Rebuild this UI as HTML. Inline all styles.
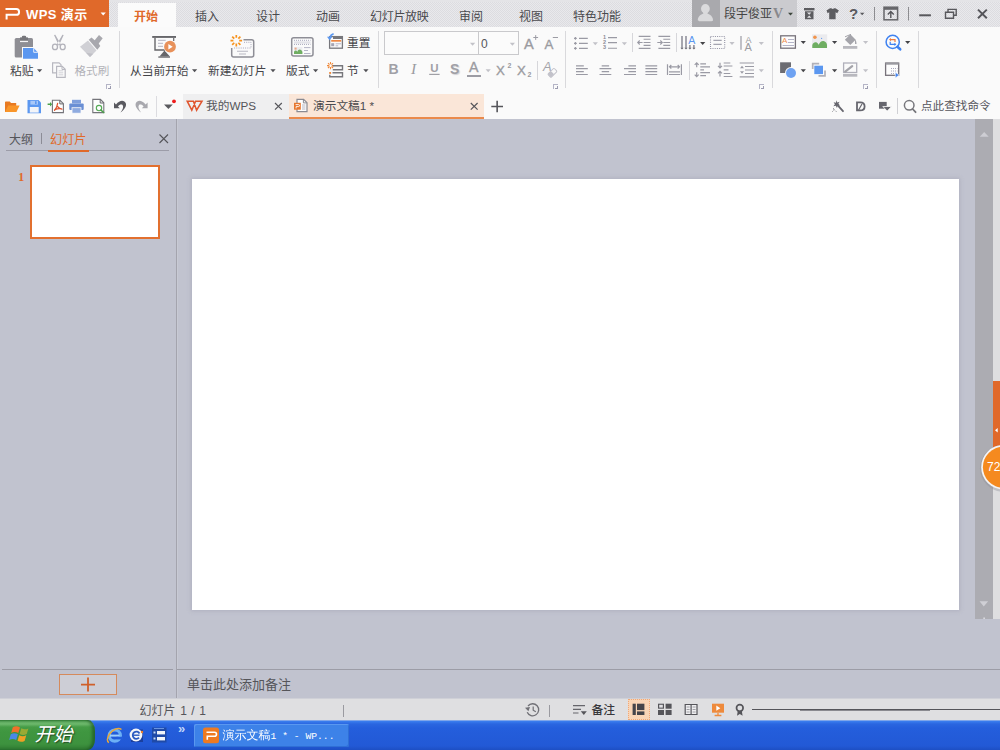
<!DOCTYPE html>
<html lang="zh-CN">
<head>
<meta charset="utf-8">
<title>WPS 演示</title>
<style>
*{box-sizing:border-box;margin:0;padding:0}
html,body{width:1000px;height:750px;overflow:hidden;background:#c1c3cf}
body{position:relative;font-family:"Liberation Sans","Noto Sans CJK SC",sans-serif;font-size:12px;color:#4a4a4e;line-height:1}
.abs{position:absolute}
.t{position:absolute;white-space:nowrap;line-height:14px;height:14px;font-size:12px}
.dis{color:#b2b2b8}
svg.ic{position:absolute;left:0;top:0;width:1000px;height:750px;overflow:visible;pointer-events:none}
#titlerow{left:0;top:0;width:1000px;height:27px;background:#e4e4e7}
#titledither{left:0;top:2px;width:1000px;height:25px;background:repeating-conic-gradient(#e9e9ec 0 25%,#dcdce0 0 50%) 0 0/2px 2px}
#wpsbtn{left:0;top:0;width:109px;height:27px;background:#e0692a}
#tabactive{left:118px;top:3px;width:58px;height:24px;background:#fbfbfb}
.tab{top:10px;color:#4a4a4e}
#userbox{left:692px;top:0;width:105px;height:27px;background:#cbcbcf}
#avatar{left:692px;top:0;width:28px;height:27px;background:#a9a9ad}
#ribbon{left:0;top:27px;width:1000px;height:65px;background:#fafafa}
.vsep{position:absolute;width:1px;background:#d9d9dc;top:31px;height:57px}
.ssep{position:absolute;width:1px;background:#d6d6da}
#qbar{left:0;top:92px;width:1000px;height:27px;background:#fafafa}
#doctab1{left:183px;top:94px;width:106px;height:25px;background:#efeff0}
#doctab2{left:289px;top:94px;width:195px;height:25px;background:#fae6d8;border-bottom:2px solid #ea8a4c}
#fontbox{left:384px;top:31px;width:135px;height:24px;border:1px solid #c9c9cc;background:#fbfbfb}
#fontdiv{left:478px;top:31px;width:1px;height:24px;background:#c9c9cc}
#main{left:0;top:119px;width:1000px;height:579px;background:#c1c3cf}
#slide{left:192px;top:179px;width:767px;height:431px;background:#fff;box-shadow:0 0 4px 1px rgba(150,150,170,.4)}
#thumb{left:30px;top:165px;width:130px;height:74px;background:#fff;border:2px solid #e2702f}
#status{left:0;top:698px;width:1000px;height:22px;background:linear-gradient(#cfd0d7 0,#cfd0d7 1px,#dfdfe1 1px)}
#taskbar{left:0;top:720px;width:1000px;height:30px;background:linear-gradient(#7fa6ea 0,#7fa6ea 1px,#3b7ff0 1px,#2a66e0 4px,#245edc 8px,#2259d6 26px,#1d4fc4 30px)}
</style>
</head>
<body>
<!-- TITLE ROW -->
<div class="abs" id="titlerow"></div>
<div class="abs" id="titledither"></div>
<div class="abs" id="wpsbtn"></div>
<div class="abs" id="tabactive"></div>
<div class="t" style="left:26px;top:7.5px;font-size:13px;color:#fff;font-weight:bold;letter-spacing:.4px">WPS 演示</div>
<div class="t tab" style="left:134px;color:#e0692a;font-weight:bold">开始</div>
<div class="t tab" style="left:195px">插入</div>
<div class="t tab" style="left:256px">设计</div>
<div class="t tab" style="left:316px">动画</div>
<div class="t tab" style="left:370px;letter-spacing:-.3px">幻灯片放映</div>
<div class="t tab" style="left:459px">审阅</div>
<div class="t tab" style="left:519px">视图</div>
<div class="t tab" style="left:573px">特色功能</div>
<div class="abs" id="userbox"></div>
<div class="abs" id="avatar"></div>
<div class="t" style="left:724px;top:7px;color:#444">段宇俊亚</div>
<div class="t" style="left:773px;top:7px;font-family:'Liberation Serif',serif;font-size:14px;color:#88888c;font-weight:bold">V</div>
<div class="t" style="left:849px;top:7px;font-size:15px;font-weight:bold;color:#5a5a5e">?</div>
<svg class="ic" viewBox="0 0 1000 750">
 <!-- WPS P logo -->
 <path d="M5.5 9H16.2a2.9 2.9 0 0 1 0 5.8H6.6V19.4" fill="none" stroke="#fff" stroke-width="2"/>
 <path d="M100.6 12.6h5.2l-2.6 3z" fill="#fff"/>
 <!-- avatar -->
 <ellipse cx="705.400" cy="8.800" rx="4.400" ry="4.700" fill="#dadadc"/>
 <path d="M697.800 20c0-3.600 3-5.600 5.600-6.600l-.6-2h5.200l-.6 2c2.600 1 5.600 3 5.600 6.600 0 .8-.6 1.200-1.400 1.200h-12.400c-.8 0-1.400-.4-1.400-1.200z" fill="#dadadc"/>
 <path d="M788 12.800h5l-2.500 2.800z" fill="#3c463c"/>
 <!-- box icon -->
 <g fill="#5c5c60">
  <rect x="804" y="8" width="10.500" height="2.400"/>
  <path d="M805 11.200h8.500v8h-8.500zM807 12.500l2.200 2.300 2.200-2.300zM807 17.800l2.200-2.300 2.200 2.300z" fill-rule="evenodd"/>
 </g>
 <!-- shirt icon -->
 <path d="M826.500 10.500l3.500-2.300h1.500c.4 1 2 1 2.400 0h1.500l3.500 2.300-1.700 2.700-1.600-.9v7h-6.400v-7l-1.600 .9z" fill="#5c5c60"/>
 <path d="M860 12.800h4.400l-2.200 2.500z" fill="#5a5a5e"/>
 <rect x="874" y="7" width="1" height="13.500" fill="#8c8c90"/>
 <rect x="908" y="7" width="1" height="13.500" fill="#8c8c90"/>
 <!-- collapse ribbon -->
 <rect x="884" y="7.200" width="13.600" height="12.600" fill="none" stroke="#66666a" stroke-width="1.500"/>
 <rect x="884" y="7.200" width="13.600" height="2.600" fill="#66666a"/>
 <path d="M890.800 18v-6M887.800 14.500l3-3 3 3" fill="none" stroke="#55555a" stroke-width="1.400"/>
 <!-- min / restore / close -->
 <rect x="919.200" y="14.300" width="11.700" height="2" fill="#58585c"/>
 <path d="M945.500 12.200h8v6h-8zM948 12v-2.600h8.200v5.800h-2.500" fill="none" stroke="#58585c" stroke-width="1.400"/>
 <path d="M978 9.600l8.800 8.600M986.800 9.600l-8.800 8.600" fill="none" stroke="#55555a" stroke-width="2"/>
</svg>
<!-- RIBBON -->
<div class="abs" id="ribbon"></div>
<div class="vsep" style="left:119px"></div>
<div class="vsep" style="left:378px"></div>
<div class="vsep" style="left:565px"></div>
<div class="vsep" style="left:772px"></div>
<div class="vsep" style="left:876px"></div>
<div class="vsep" style="left:918px"></div>
<div class="ssep" style="left:537px;top:61px;height:19px"></div>
<div class="ssep" style="left:632px;top:33px;height:19px"></div>
<div class="ssep" style="left:676px;top:33px;height:19px"></div>
<div class="ssep" style="left:689px;top:61px;height:19px"></div>
<div class="abs" id="fontbox"></div>
<div class="abs" id="fontdiv"></div>
<div class="t" style="left:10px;top:63.7px;font-size:11.7px;color:#444448">粘贴</div>
<div class="t dis" style="left:74.5px;top:63.7px;font-size:11.6px">格式刷</div>
<div class="t" style="left:130px;top:63.7px;font-size:11.7px;color:#444448">从当前开始</div>
<div class="t" style="left:208px;top:63.7px;font-size:11.7px;color:#444448">新建幻灯片</div>
<div class="t" style="left:286px;top:63.7px;font-size:11.7px;color:#444448">版式</div>
<div class="t" style="left:347px;top:35.7px;font-size:11.7px;color:#444448">重置</div>
<div class="t" style="left:347px;top:63.7px;font-size:11.7px;color:#444448">节</div>
<div class="t" style="left:481px;top:36.500px;color:#55555a;font-size:12px">0</div>
<div class="t" id="tB" style="left:388.5px;top:62px;font-weight:bold;font-size:14px;color:#a0a0a6">B</div>
<div class="t" id="tI" style="left:411px;top:62px;font-family:'Liberation Serif',serif;font-style:italic;font-size:15.5px;color:#9a9aa0">I</div>
<div class="t" id="tU" style="left:430.3px;top:61.4px;font-size:11.5px;font-weight:bold;color:#a0a0a6">U</div>
<div class="t" id="tS" style="left:450px;top:62.3px;font-size:14px;font-weight:bold;color:#a0a0a6;text-shadow:1px 1px 1px #d0d0d4">S</div>
<div class="t" id="tA" style="-webkit-text-stroke:.35px #9a9aa0;left:469px;top:60.3px;font-size:14.2px;color:#9a9aa0">A</div>
<div class="t" id="tX1" style="-webkit-text-stroke:.35px #9a9aa0;left:496px;top:63.8px;font-size:13.2px;color:#9a9aa0">X</div>
<div class="t" style="left:507.500px;top:59px;font-size:7px;font-weight:bold;color:#9a9aa0">2</div>
<div class="t" id="tX2" style="-webkit-text-stroke:.35px #9a9aa0;left:517px;top:63.8px;font-size:13.2px;color:#9a9aa0">X</div>
<div class="t" style="left:527.500px;top:67.500px;font-size:7px;font-weight:bold;color:#9a9aa0">2</div>
<div class="t" id="tAp" style="-webkit-text-stroke:.35px #9a9aa0;left:524px;top:37.3px;font-size:14.6px;color:#9a9aa0">A</div>
<div class="t" id="tAm" style="-webkit-text-stroke:.35px #9a9aa0;left:544.5px;top:38.3px;font-size:13.3px;color:#9a9aa0">A</div>
<div class="t" style="left:543px;top:60px;font-size:13px;font-style:italic;color:#a4a4aa">A</div>
<div class="t" style="left:688.3px;top:33px;font-size:10.6px;color:#5b97f0">A</div>
<div class="t" style="left:745.500px;top:33px;font-size:9px;color:#9a9aa0">A</div>
<div class="t" style="left:744.500px;top:39.500px;font-size:11px;color:#9a9aa0">A</div>
<svg class="ic" viewBox="0 0 1000 750">
<defs>
 <path id="dn" d="M0 0h5.200l-2.600 3z"/>
 <g id="launch"><rect x="0" y="0" width="5" height="1" fill="#b4b4c6"/><rect x="0" y="0" width="1" height="5" fill="#b4b4c6"/><rect x="4" y="2" width="1" height="3" fill="#9c9cb0"/><rect x="2" y="4" width="3" height="1" fill="#9c9cb0"/></g>
</defs>
<!-- paste -->
<rect x="14.700" y="38" width="18.300" height="19.500" rx="1.600" fill="#8e8e94"/>
<rect x="20" y="37.400" width="8" height="3.400" fill="#77777c"/>
<rect x="21.800" y="35.800" width="4.400" height="3" rx="1.400" fill="#77777c"/>
<rect x="20" y="40.800" width="8" height="1.300" fill="#f4f4f6"/>
<path d="M22 47h12.200l4.800 4.600v8h-17z" fill="#fafafa"/>
<path d="M23 48h10.600l4.400 4.400v6.300h-15z" fill="#5b97f0"/>
<path d="M33.700 48.200v4.100h4.100" fill="none" stroke="#f4f7fd" stroke-width=".9"/>
<use href="#dn" x="37" y="69.300" fill="#505055"/>
<!-- scissors -->
<g fill="none" stroke="#b2b2ba" stroke-width="1.300">
 <ellipse cx="55" cy="46.900" rx="2.500" ry="2.700"/>
 <ellipse cx="62.700" cy="46.900" rx="2.500" ry="2.700"/>
</g>
<path d="M54 35l1.300-.3 5.600 9.700-1.600 1.200-2-3.300zM63.700 35l-1.300-.3-5.600 9.700 1.600 1.200 2-3.300z" fill="#b2b2ba"/>
<!-- copy -->
<g fill="none" stroke="#b8b8c0" stroke-width="1.200">
 <path d="M56.300 72.800h-3.700v-10h6.500l1.900 1.900v1.500"/>
 <path d="M56.600 66.300h5.600l3 3v8h-8.600z" fill="#fafafa"/>
 <path d="M62 66.500v3h3" stroke-width="1"/>
 <path d="M58.600 70.800h4.600M58.600 72.800h4.600M58.600 74.800h4.600" stroke-width=".8" stroke="#c6c6ce"/>
</g>
<!-- format brush -->
<path d="M99 35l3.700 3.300-4 5.200 1.600 2.500-3 3.700-8.600-10 2.800-2.200 3.200 2.800z" fill="#a8a8ae"/>
<path d="M88 40.600l8.500 9.900-6.500 6.500-10-10.300z" fill="#d0d0d5"/>
<path d="M86 52.800l4 4.200 3.300-3.300z" fill="#c0c0c6"/>
<use href="#launch" x="106" y="84"/>
<!-- slideshow from current -->
<rect x="152.200" y="36" width="23.800" height="1.900" fill="#66666a"/>
<path d="M155 38v12h10" fill="none" stroke="#66666a" stroke-width="1.400"/>
<path d="M173.700 38v3" fill="none" stroke="#66666a" stroke-width="1.200"/>
<path d="M158 40.300h7.700M158 43.300h5M158 46.300h5" stroke="#b4b4c2" stroke-width="1"/>
<path d="M164.500 50.500l-5 6h10.400z" fill="#66666a"/>
<rect x="158.300" y="56.400" width="11.700" height="1.300" fill="#66666a"/>
<circle cx="170" cy="46.700" r="6.300" fill="#fafafa"/>
<circle cx="170" cy="46.700" r="5.900" fill="#e8915a"/>
<path d="M168.400 43.900v5.700l4.300-2.900z" fill="#fff"/>
<use href="#dn" x="192" y="69.300" fill="#505055"/>
<!-- new slide -->
<path d="M243.500 39.700h8.200a2 2 0 0 1 2 2v13.200a2 2 0 0 1 -2 2h-18a2 2 0 0 1 -2 -2v-7" fill="none" stroke="#8e8e96" stroke-width="1.500"/>
<path d="M244 42.300h7v5.700h-17" fill="none" stroke="#a8a8bc" stroke-width="1" stroke-dasharray="1 1.200"/>
<path d="M237 51.300h11M239 54h7" stroke="#b8b8c2" stroke-width="1.100"/>
<path d="M239.20 40.70L242.10 40.70M238.35 42.75L240.40 44.80M236.30 43.60L236.30 46.50M234.25 42.75L232.20 44.80M233.40 40.70L230.50 40.70M234.25 38.65L232.20 36.60M236.30 37.80L236.30 34.90M238.35 38.65L240.40 36.60" stroke="#f7931e" stroke-width="1.700" fill="none"/>
<use href="#dn" x="270.400" y="69.300" fill="#505055"/>
<!-- layout -->
<rect x="291.700" y="37.700" width="21.300" height="18.400" rx="2" fill="none" stroke="#8e8e96" stroke-width="1.500"/>
<rect x="294" y="41.400" width="16.500" height="2.200" fill="#e2e2e8"/>
<path d="M294 40.300h16.500M294 44.400h16.500" stroke="#a8a8bc" stroke-width="1" stroke-dasharray="1 1"/>
<rect x="294" y="47" width="8.400" height="7" fill="#ececf0"/>
<rect x="294.600" y="47.600" width="2" height="2" fill="#e8a888"/>
<path d="M294 54v-2.200c1-1.600 2.400-1.600 3.400 0 .8-2.600 3.400-3.400 5 0v2.200z" fill="#6fae62"/>
<path d="M304 47.600h6.500M304 50.500h4M304 53.500h6.500" stroke="#b4b4c6" stroke-width="1"/>
<use href="#dn" x="313" y="69.300" fill="#505055"/>
<!-- reset -->
<rect x="329.600" y="36.600" width="12.800" height="11.600" fill="none" stroke="#77777c" stroke-width="1.300"/>
<rect x="333" y="36" width="10" height="3" fill="#77777c"/>
<rect x="331.200" y="40" width="10" height="1.700" fill="#ee8844"/>
<rect x="331.200" y="43.200" width="3" height="3" fill="#a4a4b4"/>
<path d="M335.600 43.800h5.400M335.600 45.800h2.600" stroke="#b4b4c6" stroke-width="1"/>
<path d="M333.600 33.800c-2 .6-3.200 2-3.600 3.800" fill="none" stroke="#5b97f0" stroke-width="1.700"/>
<path d="M327 36.800h5.400l-2.800 3.400z" fill="#5b97f0"/>
<!-- section -->
<g stroke="#f08a3c" stroke-width="1.100">
 <path d="M330.500 62v2.300M330.500 67v2.300M327 65.600h2.300M331.800 65.600h2.300M328 63.200l1.500 1.500M333 63.200l-1.500 1.500M328 68l1.500-1.500M333 68l-1.500-1.500"/>
</g>
<path d="M332.800 65.700h9.700v4h-9.700M329.800 74.800v2h12.700v-4.100h-10" fill="none" stroke="#77777c" stroke-width="1.400"/>
<rect x="329.200" y="72" width="1.900" height="1.900" fill="#f08a3c"/>
<use href="#dn" x="363.300" y="69.300" fill="#505055"/>
<!-- font box arrows -->
<use href="#dn" x="470" y="42.800" fill="#c2c2c8" transform="translate(0 0)"/>
<use href="#dn" x="509.800" y="42.800" fill="#c2c2c8"/>
<rect x="429.2" y="73.8" width="10.4" height="1.2" fill="#a0a0a6"/>
<!-- A underline -->
<rect x="467" y="75" width="14" height="2" fill="#9c9ca4"/>
<use href="#dn" x="485.600" y="69.300" fill="#c2c2c8"/>
<!-- A+ A- marks -->
<path d="M533.300 37.500h4.800M535.700 35.100v4.800" stroke="#9c9ca4" stroke-width="1"/>
<path d="M552.800 37.500h5.200" stroke="#9c9ca4" stroke-width="1"/>
<!-- eraser -->
<g transform="rotate(-45 552.400 72.800)">
 <rect x="548" y="70.500" width="8.800" height="4.600" rx="1" fill="#fafafa" stroke="#c2c2ca" stroke-width="1"/>
 <rect x="548" y="70.500" width="4.600" height="4.600" rx="1" fill="#c2c2ca"/>
</g>
<use href="#launch" x="553" y="84"/>
<!-- bullets -->
<g stroke="#9a9aa4" stroke-width="1.100">
 <path d="M579 38.400h8.800M579 43.400h8.800M579 48.400h8.800"/>
 <path d="M574 38.400h2.800M575.400 37v2.800M574 43.400h2.800M575.400 42v2.800M574 48.400h2.800M575.400 47v2.800"/>
 <path d="M608 37.600h9M608 42.600h9M608 48.300h9"/>
</g>
<use href="#dn" x="592.700" y="42.300" fill="#c2c2c8"/>
<use href="#dn" x="621.800" y="42.300" fill="#c2c2c8"/>
<!-- indent -->
<g stroke="#9a9aa4" stroke-width="1.100">
 <path d="M638.700 36.400h11.800M643.600 39.300h6.900M643.600 42.500h6.900M643.600 45.400h6.900M638.700 48.400h11.800"/>
 <path d="M637.600 42.500h5M639.700 40.500l-2 2 2 2" fill="none"/>
 <path d="M658.400 36.400h11.800M663.300 39.300h6.900M663.300 42.500h6.900M663.300 45.400h6.900M658.400 48.400h11.800"/>
 <path d="M657.300 42.500h5M660.300 40.500l2 2-2 2" fill="none"/>
</g>
<!-- text direction -->
<g stroke="#8a8a96" stroke-width="1.500">
 <path d="M682 36v13M686 36v13M689.900 45v4M693.900 45v4"/>
</g>
<path d="M680.300 47.800h3.400l-1.700 1.800zM684.300 47.800h3.400l-1.700 1.800zM688.200 47.800h3.400l-1.700 1.800zM692.200 47.800h3.400l-1.700 1.800z" fill="#77777f"/>
<use href="#dn" x="700.100" y="42" fill="#444448"/>
<!-- align text dotted -->
<rect x="710.500" y="36.500" width="14.200" height="12" fill="none" stroke="#9090a2" stroke-width="1.100" stroke-dasharray="1 1.200"/>
<path d="M713.400 40.400h8.300M713.400 44.400h8.300" stroke="#a4a4b0" stroke-width="1.100"/>
<use href="#dn" x="729.400" y="42" fill="#c2c2c8"/>
<!-- char spacing -->
<path d="M741 36v13.700" stroke="#9a9aa4" stroke-width="1.200"/>
<use href="#dn" x="758.700" y="42" fill="#c2c2c8"/>
<!-- align row -->
<g stroke="#9a9aa4" stroke-width="1.200">
 <path d="M576 65.800h7.800M576 68.700h11.800M576 71.600h7.800M576 74.500h11.800"/>
 <path d="M601.700 65.800h7.400M599.500 68.700h11.800M601.700 71.600h7.400M599.500 74.500h11.800"/>
 <path d="M628.400 65.800h7.600M624 68.700h12M628.400 71.600h7.600M624 74.500h12"/>
 <path d="M645.400 65.800h11.800M645.400 68.700h11.800M645.400 71.600h11.800M645.400 74.500h11.800"/>
 <path d="M667.500 64.200v10.800M681.400 64.200v10.800M669 71.800h11M669 74.500h11"/>
 <path d="M669.500 66.800h10M671.300 65l-1.800 1.800 1.800 1.800M677.700 65l1.800 1.800-1.800 1.800" fill="none"/>
</g>
<!-- line spacing -->
<g stroke="#9a9aa4" stroke-width="1.200" fill="none">
 <path d="M700.300 63.900h5.700M700.300 66.800h9.700M700.300 69.800h3.700M700.300 72.600h9.700M700.300 75.600h5.700"/>
 <path d="M696.700 62.800v4.400M694.700 64.800l2-2 2 2M696.700 72.200v4.400M694.700 74.600l2 2 2-2"/>
 <path d="M723.700 63h6.600M723.700 66h8.700M723.700 69.800h4.800M723.700 73.500h6.600M723.700 76.500h8.700"/>
 <path d="M720 62.800v5M718 65.800l2 2 2-2M720 71.400v5M718 73.400l2-2 2 2"/>
 <path d="M739.700 63h14.300M745 66.500h9M745 70h9M745 73.500h9M739.700 76.800h14.300"/>
</g>
<path d="M740 68.300h4l-2-2.600zM740 71.200h4l-2 2.600z" fill="#9a9aa4"/>
<use href="#dn" x="758.700" y="69.300" fill="#c2c2c8"/>
<use href="#launch" x="759" y="84"/>
<!-- text box -->
<rect x="780.700" y="35.800" width="14.700" height="12.400" fill="#fdfdfd" stroke="#77727a" stroke-width="1.300"/>
<path d="M788 39.500h6M788 42.500h6M782.600 45.500h11.400" stroke="#b4b4c8" stroke-width="1"/>
<use href="#dn" x="800.700" y="41" fill="#444448"/>
<!-- picture -->
<rect x="812" y="34.300" width="15.200" height="13.600" fill="#ebebee"/>
<circle cx="814.900" cy="37.300" r="1.800" fill="#f0944c"/>
<circle cx="821.600" cy="38.400" r=".6" fill="#6aa0f0"/>
<path d="M812.300 47.900v-3c.8-2.200 2.600-3.300 4.400-2.400 1 .5 1.500 1.500 2 2.300 1-2.500 2.600-4 4.700-3.800 2 .2 3.200 1.700 3.600 3.800v3.100z" fill="#6fae62"/>
<use href="#dn" x="832" y="41" fill="#444448"/>
<!-- fill bucket -->
<path d="M850.300 34.300l5.400 5.400-5.400 5.400-5.400-5.400z" fill="#a4a4aa"/>
<path d="M845 36.800l6-2.500" stroke="#a4a4aa" stroke-width="1"/>
<path d="M855 39.500c1 .7 1.500 2.500 1.500 4.500h-1.500z" fill="#a4a4aa"/>
<rect x="843" y="46" width="14.300" height="2.800" fill="#b8b8be"/>
<use href="#dn" x="863" y="41" fill="#c2c2c8"/>
<!-- shapes -->
<rect x="780.100" y="62.300" width="10.900" height="10.700" fill="#6c6c72"/>
<circle cx="791" cy="73" r="6" fill="#fafafa"/>
<circle cx="791" cy="73" r="5" fill="#6ea2f2"/>
<use href="#dn" x="800.700" y="69.200" fill="#444448"/>
<!-- arrange -->
<path d="M812.700 69v-5.400h6.500M825 70.500v5.300h-6.500" fill="none" stroke="#b0b0b8" stroke-width="1.700"/>
<rect x="814.300" y="65.700" width="8.700" height="8.400" fill="#5b97f0"/>
<use href="#dn" x="832" y="69.200" fill="#444448"/>
<!-- outline -->
<rect x="843.600" y="63" width="13.100" height="9.500" fill="none" stroke="#b0b0ba" stroke-width="1.300"/>
<path d="M845.200 71.700l7-5.600" stroke="#a4a4aa" stroke-width="2.200" stroke-linecap="round"/>
<rect x="843" y="74" width="14.300" height="2.700" fill="#b8b8be"/>
<use href="#dn" x="863" y="69.200" fill="#c2c2c8"/>
<use href="#launch" x="863" y="84"/>
<!-- find replace -->
<circle cx="892.700" cy="41.900" r="6.600" fill="none" stroke="#3f82f0" stroke-width="1.500"/>
<path d="M897.400 46.800l2.800 2.500" stroke="#3f82f0" stroke-width="2.600" stroke-linecap="round"/>
<path d="M895 42v-2.400h-5" fill="none" stroke="#ee7a3c" stroke-width="1.200"/>
<path d="M891 38l-2 1.600 2 1.600z" fill="#ee7a3c"/>
<path d="M890.200 41.800v2.500h5" fill="none" stroke="#3f82f0" stroke-width="1.200"/>
<path d="M894.400 42.700l2 1.600-2 1.600z" fill="#3f82f0"/>
<use href="#dn" x="905.100" y="41" fill="#444448"/>
<!-- selection pane -->
<rect x="885.600" y="63.100" width="13.100" height="12.200" fill="#fdfdfd" stroke="#77727a" stroke-width="1.300"/>
<rect x="885.600" y="62.500" width="13.100" height="2.200" fill="#9a9aa0"/>
<path d="M891 68.500h6.500M891 71h6.500M891 73.500h4" stroke="#a8a8bc" stroke-width="1" stroke-dasharray="1 1"/>
<path d="M895.300 72.300l3.900 2.800-3.900 2.800z" fill="#3f82f0" stroke="#fdfdfd" stroke-width=".6"/>
</svg>
<div class="t" style="left:603px;top:34.5px;font-size:5.500px;font-weight:bold;color:#8c8c96;line-height:5px;height:20px;white-space:normal;width:4px">1 2 3</div>
<div class="t" style="left:782px;top:34.3px;font-size:8px;color:#ee8e4c">A</div>
<!-- QUICK BAR + DOC TABS -->
<div class="abs" id="qbar"></div>
<div class="abs" id="doctab1"></div>
<div class="abs" id="doctab2"></div>
<div class="ssep" style="left:156px;top:96px;height:21px;background:#dcdce0"></div>
<div class="ssep" style="left:897px;top:98px;height:16px;background:#d0d0d4"></div>
<div class="t" style="left:206px;top:98.7px;font-size:11.7px;color:#55555a">我的WPS</div>
<div class="t" style="left:313px;top:98.7px;font-size:11.7px;color:#4a4a4e">演示文稿1 *</div>
<div class="t" style="left:921px;top:99px;font-size:11.6px;color:#55555a">点此查找命令</div>
<svg class="ic" viewBox="0 0 1000 750">
<!-- open -->
<path d="M5 102.300c0-.5.300-.8.800-.8h4l1.200 1.400h5.200v9.100h-11.200z" fill="#e87a22"/>
<path d="M8.200 105.400h11.400l-3.200 6.600h-11.400z" fill="#f9962a"/>
<!-- save -->
<path d="M27.500 100h11l2.500 2.500v10.700h-13.500z" fill="#5b97f0"/>
<rect x="30.400" y="100.800" width="7.600" height="3.800" fill="#a9c8f8"/>
<rect x="35" y="101.200" width="1.600" height="2.800" fill="#5b97f0"/>
<rect x="29.800" y="107" width="8.900" height="5.600" fill="#f2f4f8"/>
<!-- pdf -->
<path d="M52.400 100.300h7.600l3.400 3.400v8.900h-11z" fill="#fdfdfd" stroke="#74747a" stroke-width="1.100"/>
<path d="M59.800 100.500v3.400h3.400" fill="none" stroke="#66666a" stroke-width="1"/>
<path d="M57.600 103.500c-.3 2.500-1.400 5-3 6.700M57.700 106.600c1 1.400 2.300 2.300 4.200 2.600M54.800 109.600c2-.9 4.500-1.300 6.800-.8" fill="none" stroke="#e0532e" stroke-width="1.300" stroke-linecap="round"/>
<path d="M47.600 103.500h2.400v-1.500l2.200 2.200-2.200 2.200v-1.500h-2.400z" fill="#4aa04a"/>
<!-- print -->
<rect x="72" y="99.800" width="9" height="3.600" fill="#7f9fdc"/>
<rect x="69.300" y="103.600" width="14.400" height="6.400" rx="1" fill="#6a8fd4"/>
<rect x="72" y="107.700" width="9" height="5.500" fill="#8fabdf" stroke="#fafafa" stroke-width=".8"/>
<!-- preview -->
<path d="M92.800 99.400h7.600l3.400 3.400v9.800h-11z" fill="#fdfdfd" stroke="#74747a" stroke-width="1.100"/>
<path d="M100.200 99.600v3.400h3.400" fill="none" stroke="#66666a" stroke-width="1"/>
<circle cx="99" cy="108.100" r="2.700" fill="#fdfdfd" stroke="#55aa55" stroke-width="1.100"/>
<path d="M101 110.100l2.700 2.400" stroke="#4aa04a" stroke-width="1.500" stroke-linecap="round"/>
<!-- undo / redo -->
<path d="M114 102.400v5.800h5.800l-1.800-1.800c1.500-1.900 3.500-2.400 4.600-1.400 1.200 1.500.4 4.500-2.100 7.600 4-3.100 6.300-6.600 5.300-9.400-1.200-3.200-5.800-4-9.800 1.200z" fill="#5a5a60"/>
<path d="M114 102.400v5.800h5.800l-1.800-1.800c1.500-1.900 3.500-2.400 4.600-1.400 1.200 1.500.4 4.500-2.100 7.600 4-3.100 6.300-6.600 5.300-9.400-1.200-3.200-5.800-4-9.800 1.200z" fill="#a8a8ae" transform="translate(261.600 0) scale(-1 1)"/>
<!-- customise arrow + red dot -->
<path d="M164 104.600h8.800l-4.400 4.500z" fill="#5a5a5e"/>
<circle cx="174" cy="101.300" r="1.900" fill="#ee1c1c"/>
<!-- W logo -->
<path d="M187.200 101.200h6.200l3.200 9 5.400-9h-6.400l-3.800 9z" fill="none" stroke="#e0562f" stroke-width="1.500" stroke-linejoin="miter"/>
<!-- tab closes -->
<path d="M275 103l6.800 6.600M281.800 103l-6.800 6.600" stroke="#55555a" stroke-width="1.200"/>
<path d="M470.800 103l6.800 6.600M477.600 103l-6.800 6.600" stroke="#55555a" stroke-width="1.200"/>
<path d="M491.300 106.500h11.700M497.150 100.700v11.600" stroke="#55555a" stroke-width="1.600"/>
<!-- doc icon -->
<path d="M297 99.300h6.600l3.400 3.400v9h-10z" fill="#fdfdfd" stroke="#8a8a92" stroke-width="1.200"/>
<path d="M303.400 99.500v3.400h3.400" fill="none" stroke="#8a8a92" stroke-width="1"/>
<path d="M302 105h3.400M302 107h3.400M302 109h3.400" stroke="#b8b8c4" stroke-width="1"/>
<rect x="294" y="102.800" width="6.800" height="6.900" fill="#e8772e"/>
<path d="M295.600 104.600h2.900a1 1 0 0 1 0 2h-2.400v1.800" fill="none" stroke="#fff" stroke-width=".9"/>
<!-- wand -->
<path d="M838 105.600l5 5.600" stroke="#66666e" stroke-width="1.800" stroke-linecap="round"/>
<path d="M836.300 100.300l1 2.200 2.300-.7-1.200 2 1.700 1.700-2.400.1-.7 2.300-1.200-2.100-2.400.4 1.500-1.900-1.300-2 2.400.5z" fill="#66666e"/>
<path d="M833 108.500l1.500 1.200M835.500 110.800l.8.800M832.500 111.500l.8-.8" stroke="#66666e" stroke-width="1"/>
<!-- D -->
<path d="M857 102.400h3.200c3 0 4.400 1.800 4.400 4s-1.400 4-4.400 4h-3.200z" fill="none" stroke="#66666e" stroke-width="1.800"/>
<path d="M858.600 110l3.400-6" stroke="#66666e" stroke-width="1.200"/>
<!-- third -->
<rect x="879" y="101.900" width="7.700" height="6.800" fill="#66666e"/>
<path d="M882.800 106.500h8.800l-4.400 4.600z" fill="#66666e" stroke="#fafafa" stroke-width=".8"/>
<!-- search -->
<circle cx="909.200" cy="105.300" r="4.800" fill="none" stroke="#77777c" stroke-width="1.500"/>
<path d="M912.600 109l3 3.200" stroke="#77777c" stroke-width="1.800" stroke-linecap="round"/>
</svg>
<!-- MAIN -->
<div class="abs" id="main"></div>
<div class="abs" style="left:176px;top:119px;width:1px;height:579px;background:#a4a4ae"></div>
<div class="abs" style="left:177px;top:119px;width:1px;height:579px;background:#c8cad4"></div>
<div class="abs" style="left:6px;top:150px;width:163px;height:1px;background:#9c9ca8"></div>
<div class="abs" style="left:48px;top:150px;width:41px;height:2px;background:#e0692a"></div>
<div class="t" style="left:9px;top:132.5px;color:#55555a">大纲</div>
<div class="abs" style="left:41px;top:133px;width:1px;height:11px;background:#8c8c96"></div>
<div class="t" style="left:50px;top:132.5px;font-size:12.2px;color:#e0692a">幻灯片</div>
<div class="t" style="left:18.3px;top:169.5px;font-family:'Liberation Serif',serif;font-weight:bold;font-size:12px;color:#e0692a">1</div>
<div class="abs" id="thumb"></div>
<div class="abs" id="slide"></div>
<!-- scrollbar -->
<div class="abs" style="left:975px;top:119px;width:18px;height:500px;background:#acacb2"></div>
<div class="abs" style="left:993px;top:119px;width:7px;height:500px;background:#dedee0"></div>
<div class="abs" style="left:993px;top:381px;width:7px;height:100px;background:#e0692a"></div>
<!-- notes -->
<div class="abs" style="left:2px;top:669px;width:171px;height:1px;background:#9c9ca6"></div>
<div class="abs" style="left:177px;top:669px;width:823px;height:1px;background:#9c9ca6"></div>
<div class="abs" style="left:59px;top:674px;width:58px;height:21px;border:1px solid #d58a5c;background:#cdced6"></div>
<div class="t" style="left:187px;top:677px;font-size:13px;line-height:15px;height:15px;color:#55555a">单击此处添加备注</div>
<svg class="ic" viewBox="0 0 1000 750">
 <path d="M159.500 134.500l8.500 8.500M168 134.500l-8.500 8.500" stroke="#55555a" stroke-width="1.100"/>
 <path d="M979.700 136.700l4.500-4.700 4.500 4.700z" fill="#cdcdd3"/>
 <path d="M979.500 601.200l4.300 5.200 4.300-5.200z" fill="#cfcfd5"/>
 <rect x="983.500" y="617.500" width="1.200" height="1.500" fill="#ececf0"/>
 <path d="M81 684.600h14M88 677.600v14" stroke="#d0602a" stroke-width="1.800"/>
 <path d="M997.700 428l-2.700 2.200 2.700 2.200z" fill="#fff"/>
 <circle cx="1003.500" cy="468.200" r="23.500" fill="#8a8a92" opacity=".35"/>
 <circle cx="1003.500" cy="467.200" r="22.300" fill="#f4f4f6"/>
 <circle cx="1003.500" cy="467.200" r="20.600" fill="#f58a1f"/>
</svg>
<div class="t" style="left:987px;top:459.5px;font-size:12px;color:#fff">72</div>
<!-- STATUS BAR -->
<div class="abs" id="status"></div>
<div class="t" style="left:139.6px;top:704px;word-spacing:1.2px;font-size:12px;color:#55555a">幻灯片 1 / 1</div>
<div class="abs" style="left:343px;top:705px;width:1px;height:12px;background:#9a9aa0"></div>
<div class="abs" style="left:549px;top:705px;width:1px;height:12px;background:#9a9aa0"></div>
<div class="abs" style="left:628px;top:699px;width:22px;height:21px;background:#f9d5b6;border:1px dotted #f0a878"></div>
<div class="t" style="left:591.500px;top:703px;color:#38383c;font-weight:500;font-size:11.800px">备注</div>
<div class="abs" style="left:752px;top:709px;width:248px;height:1px;background:#55555a"></div>
<div class="abs" style="left:800px;top:710px;width:130px;height:1px;background:#8a8a90"></div>
<!-- TASKBAR -->
<div class="abs" id="taskbar"></div>
<div class="abs" style="left:0;top:720px;width:95px;height:30px;border-radius:0 7px 7px 0/0 11px 11px 0;background:linear-gradient(#3a8a3c 0,#62ae62 2px,#6db86c 4px,#459c46 7px,#3f9640 12px,#3d923e 24px,#2f7a32 30px);box-shadow:inset -3px 0 3px rgba(20,70,30,.55)"></div>
<div class="t" style="left:34.5px;top:723.5px;font-size:19px;line-height:22px;height:22px;color:#fff;font-style:italic;font-family:'Liberation Sans','Noto Sans CJK SC',sans-serif;font-weight:400;text-shadow:1px 1px 1px rgba(30,60,30,.8);letter-spacing:0px">开始</div>
<div class="abs" style="left:194px;top:724px;width:155px;height:23px;border-radius:2px;background:#3d82e8;box-shadow:inset 1px 1px 0 #5a98f0,inset -1px -1px 0 #2f6fd6"></div>
<div class="t" style="left:222.5px;top:729px;color:#fff;font-family:'Liberation Mono','WenQuanYi Zen Hei','Noto Sans CJK SC',monospace;font-size:12px;letter-spacing:0">演示文稿<span style="font-size:9.7px">1 * - WP...</span></div>
<div class="t" style="left:178px;top:722px;color:#c0d6fa;font-size:13px;font-weight:bold;letter-spacing:-1px">»</div>
<svg class="ic" viewBox="0 0 1000 750">
 <!-- history -->
 <path d="M528 706a6 6 0 1 1 -.8 6.200" fill="none" stroke="#707076" stroke-width="1.300"/>
 <path d="M525 707.800l5-.8-1.600 4.200z" fill="#707076"/>
 <path d="M533.200 706.400v3.800l2.600 1.600" fill="none" stroke="#707076" stroke-width="1.200"/>
 <!-- notes icon -->
 <path d="M573 705.600h12M573 709.400h8M573 713h5.500" stroke="#66666c" stroke-width="1.200"/>
 <path d="M580.800 711.200h6l-3 3.800z" fill="#55555a"/>
 <!-- normal view -->
 <rect x="632.600" y="703.700" width="3.200" height="11.300" fill="#44444a"/>
 <rect x="637" y="703.700" width="7.400" height="6.400" fill="#44444a"/>
 <rect x="637" y="711.400" width="7.400" height="3.600" fill="#44444a"/>
 <!-- sorter -->
 <g fill="#55555a"><rect x="658" y="703.700" width="6" height="5"/><rect x="665.600" y="703.700" width="6" height="5"/><rect x="658" y="710" width="6" height="5"/><rect x="665.600" y="710" width="6" height="5"/></g>
 <rect x="659.200" y="704.800" width="3.600" height="2.800" fill="#e0e0e4"/>
 <!-- reading -->
 <path d="M685.200 704.500h5.900v10h-5.900zM691.100 704.500h5.900v10h-5.900z" fill="#eeeef0" stroke="#55555a" stroke-width="1.200"/>
 <path d="M686.600 707h3M686.600 709.500h3M686.600 712h3M692.600 707h3M692.600 709.500h3M692.600 712h3" stroke="#8a8a92" stroke-width=".8"/>
 <!-- slideshow -->
 <rect x="712" y="703.700" width="12" height="9" fill="#ee8a3c"/>
 <path d="M716.300 705.600v5.200l4-2.600z" fill="#fff"/>
 <path d="M718 712.700v2.300M714.600 715.500h6.800" stroke="#ee8a3c" stroke-width="1.300"/>
 <!-- zoom medal -->
 <circle cx="739.800" cy="708" r="3.300" fill="none" stroke="#55555a" stroke-width="1.700"/>
 <path d="M737.800 710.800l-.8 5 2.800-1.800 2.800 1.800-.8-5" fill="#55555a"/>
 <!-- windows flag -->
 <path d="M12.800 727.300c2.400-1.300 4.700-1.300 7.200.1l-1.700 5.600c-2.400-1.300-4.700-1.400-7.100-.1z" fill="#f0702a"/>
 <path d="M21.300 728.300c2.400 1.400 4.700 1.400 7.100.1l-1.700 5.600c-2.400 1.300-4.700 1.300-7.100-.1z" fill="#9aaa34"/>
 <path d="M10.800 734.200c2.400-1.300 4.700-1.200 7.100.1l-1.700 5.600c-2.400-1.300-4.700-1.300-7.100 0z" fill="#4a88e8"/>
 <path d="M19.200 735.200c2.400 1.400 4.700 1.400 7.100.1l-1.700 5.600c-2.400 1.300-4.700 1.300-7.100-.1z" fill="#f0a024"/>
 <!-- IE -->
 <circle cx="114.800" cy="735.600" r="5.600" fill="none" stroke="#6cb0f6" stroke-width="3.200"/>
 <path d="M110 735.600h9.500" stroke="#9fd0fb" stroke-width="2"/>
 <rect x="116.500" y="736.800" width="6.500" height="2.600" fill="#245edc"/>
 <path d="M121.500 729.500c-3-2.500-8.500-.5-12 4.500-2.800 4-2.600 7.600-.6 8.600" fill="none" stroke="#e8a83c" stroke-width="1.500"/>
 <!-- icon 2 -->
 <rect x="131" y="729.500" width="12" height="12.500" fill="#1a3f9e"/>
 <circle cx="136" cy="735" r="6.400" fill="#f4f6fa"/>
 <path d="M139.500 733.500a3.600 3.600 0 1 0 -.5 4.200" fill="none" stroke="#2a5ac0" stroke-width="1.800"/>
 <path d="M133 735.200h6.500" stroke="#2a5ac0" stroke-width="1.400"/>
 <circle cx="142" cy="732" r="1.200" fill="#f0802a"/>
 <!-- icon 3 -->
 <rect x="152" y="727.500" width="14.500" height="15" fill="#1f4aa8"/>
 <rect x="157" y="731" width="8" height="3.400" fill="#f0f4fa"/>
 <rect x="157" y="737" width="8" height="3.400" fill="#f0f4fa"/>
 <rect x="153.500" y="731.500" width="2" height="2" fill="#c8d8f4"/>
 <rect x="153.500" y="737.500" width="2" height="2" fill="#c8d8f4"/>
 <path d="M154 728.500h10" stroke="#6a94e0" stroke-width="1"/>
 <!-- task P icon -->
 <rect x="203" y="727.600" width="16" height="15.600" rx="2.500" fill="#ee7a22"/>
 <path d="M206.500 732.200h8a2 2 0 0 1 0 4h-7.200v3.600" fill="none" stroke="#fff" stroke-width="1.600"/>
</svg>
</body>
</html>
